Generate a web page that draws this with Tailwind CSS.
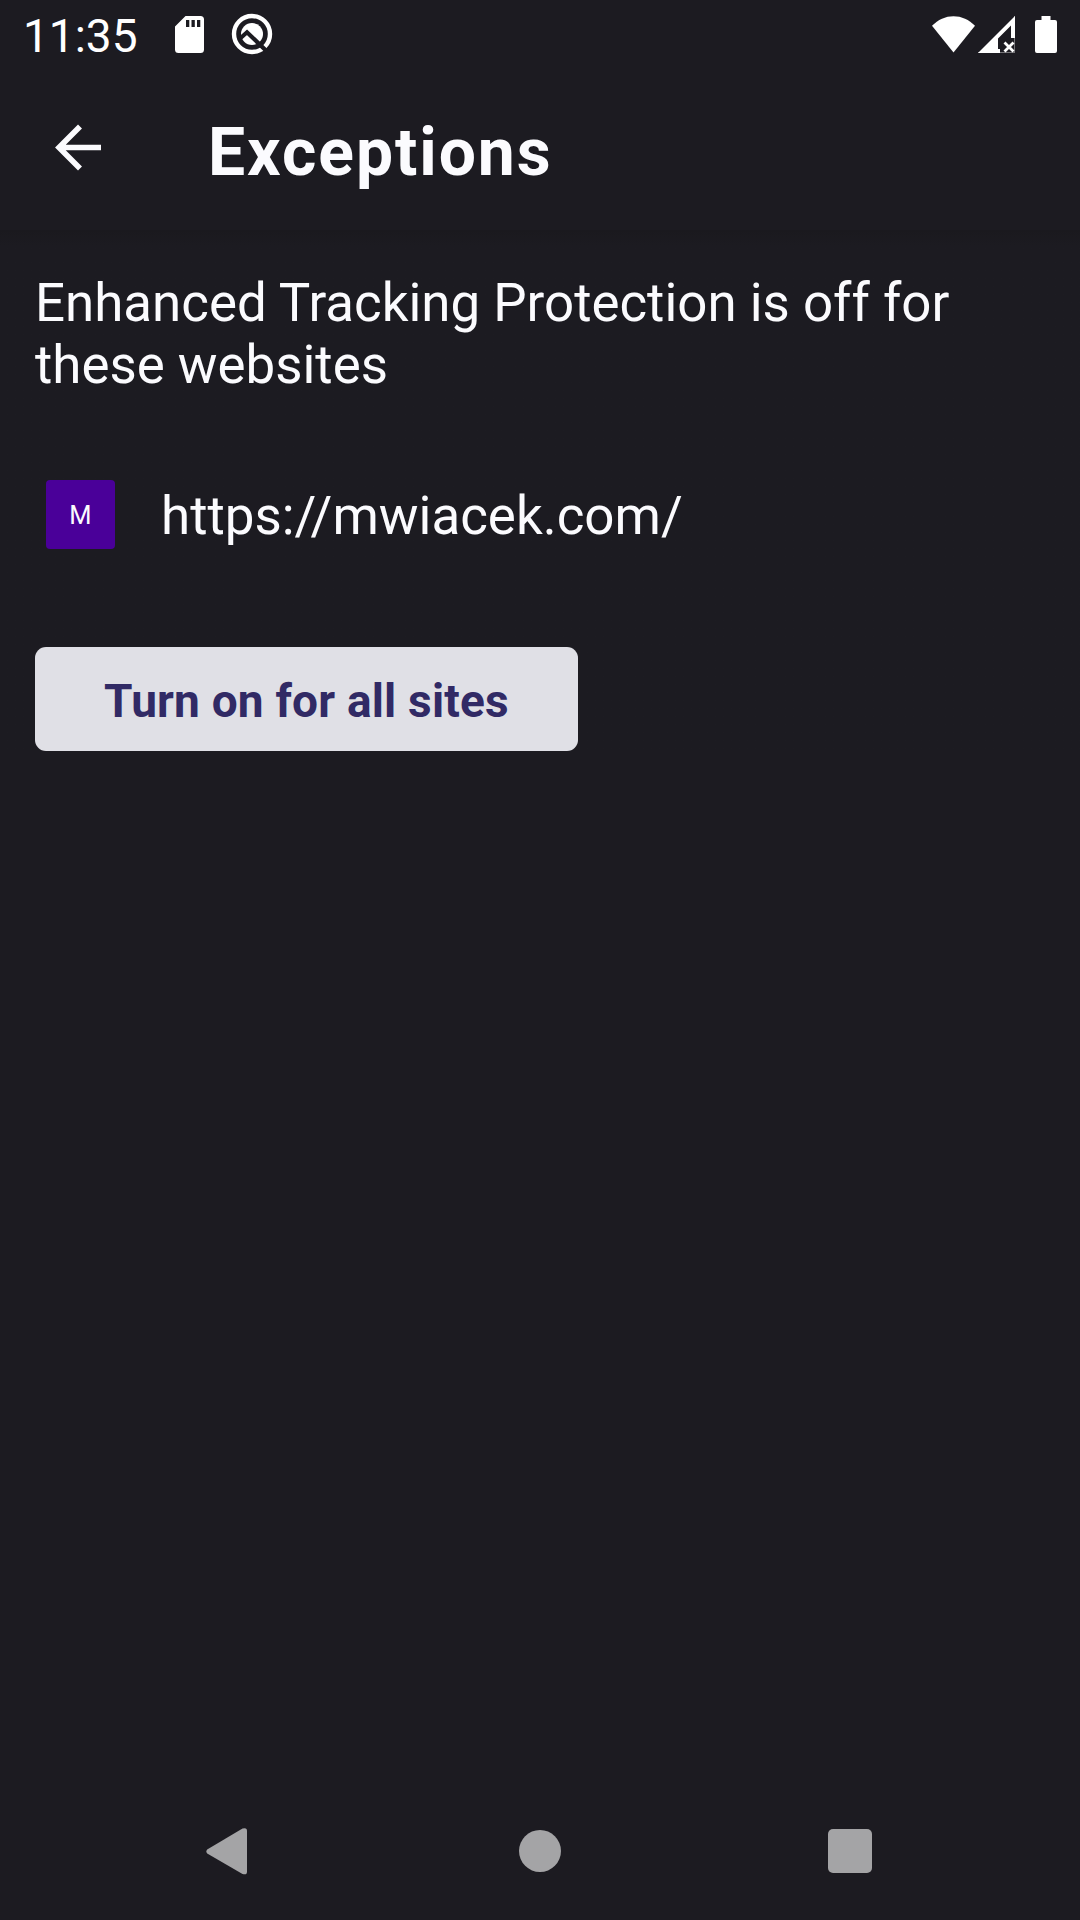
<!DOCTYPE html>
<html lang="en">
<head>
<meta charset="utf-8">
<title>Exceptions</title>
<script src="https://cdn.jsdelivr.net/npm/@tailwindcss/browser@4"></script>
</head>
<body class="bg-[#1c1b21]">
<div class="flex h-[1920px] w-[1080px] flex-col overflow-hidden bg-[#1c1b21] font-[Roboto,sans-serif] text-[#fbfbfe]">
  <div class="flex h-[70px] shrink-0 items-start pl-[23px] text-white">
    <div class="mt-[9px] w-[152px] text-[46px] leading-[54px]">11:35</div>
    <svg class="mt-4 h-[37px] w-[29px]" viewBox="0 0 29 37" fill="currentColor"><path fill-rule="evenodd" d="M10.500 0H25.500a3.500 3.500 0 0 1 3.500 3.500V33.500a3.500 3.500 0 0 1-3.500 3.500H3.500a3.500 3.500 0 0 1-3.500-3.500V10.500ZM11 4V11H14.300V4ZM16.500 4V11H19.800V4ZM22 4V11H25.300V4Z"/></svg>
    <svg class="mt-[13px] ml-[27px] h-[42px] w-[42px]" viewBox="0 0 42 42" fill="none"><circle cx="21" cy="21" r="18" stroke="currentColor" stroke-width="4.400"/><circle cx="21" cy="21" r="11" fill="currentColor"/><path d="M8.500 26L16 19.300L36 38.500" stroke="#1c1b21" stroke-width="4.200"/></svg>
    <svg class="mt-4 ml-[659px] h-[37px] w-[43px]" viewBox="0 0 43 37" fill="currentColor"><path d="M0 9.800C6 3.500 13.500.2 21.500.2S37 3.500 43 9.800L21.500 36.500Z"/></svg>
    <svg class="mt-4 ml-[3px] h-[37px] w-[37px]" viewBox="0 0 37 37"><path fill="currentColor" d="M0 37L37 0V22H33V9.500L20 22.500V33H22V37Z"/><path d="M36.600 0V36.600H0" stroke="currentColor" stroke-opacity=".55" stroke-width=".8" fill="none"/><path d="M26.500 26.500L35.500 35.500M35.500 26.500L26.500 35.500" stroke="currentColor" stroke-width="2.800"/></svg>
    <svg class="mt-4 ml-5 h-[37px] w-[22px]" viewBox="0 0 22 37" fill="currentColor"><path d="M6.500 0h9v4H20a2 2 0 0 1 2 2V35a2 2 0 0 1-2 2H2a2 2 0 0 1-2-2V6a2 2 0 0 1 2-2h4.500Z"/></svg>
  </div>
  <header class="flex h-[160px] shrink-0 items-start pl-[55px]">
    <svg class="mt-[54px] h-[47px] w-[47px]" viewBox="0 0 47 47" fill="none" stroke="currentColor" stroke-width="5.600"><path d="M25 2.500L4 23.500L25 44.500M4 23.500H46"/></svg>
    <h1 class="mt-[44px] ml-[106px] text-[66px] leading-[78px] font-bold tracking-[1.950px]">Exceptions</h1>
  </header>
  <main class="flex flex-col items-start bg-linear-to-b from-[#1a191e] to-[#1c1b21] to-[16px] px-[35px] pt-[42px]">
    <p class="w-[970px] text-[52.850px] leading-[62px]">Enhanced Tracking Protection is off for<br>these websites</p>
    <div class="mt-[84px] flex h-[69px] items-center pl-[11px]">
      <div class="flex h-[69px] w-[69px] items-center justify-center rounded-[4px] bg-[#4a0099] text-[25.500px] leading-[30px]">M</div>
      <div class="mt-[2px] ml-[46px] text-[52.900px] leading-[62px]">https://mwiacek.com/</div>
    </div>
    <button class="mt-[98px] flex h-[104px] w-[543px] items-center justify-center rounded-[11px] bg-[#e0e0e6] pt-[3px] text-[46px] leading-[54px] font-bold tracking-[0.190px] text-[#312a65]">Turn on for all sites</button>
  </main>
  <nav class="mt-auto flex h-[138px] shrink-0 items-center pl-[206px] text-[#a4a4a6]">
    <svg class="h-[48px] w-[42px]" viewBox="0 0 42 48" fill="currentColor"><path d="M1.200 22.500L36.500 1.600Q41 0 41 4V44.500Q41 48.500 36.500 46.900L1.200 26.500Q-.5 24.500 1.200 22.500Z"/></svg>
    <div class="ml-[271px] h-[42px] w-[42px] rounded-full bg-current"></div>
    <div class="ml-[266.500px] h-[44px] w-[44px] rounded-[5px] bg-current"></div>
  </nav>
</div>
</body>
</html>
